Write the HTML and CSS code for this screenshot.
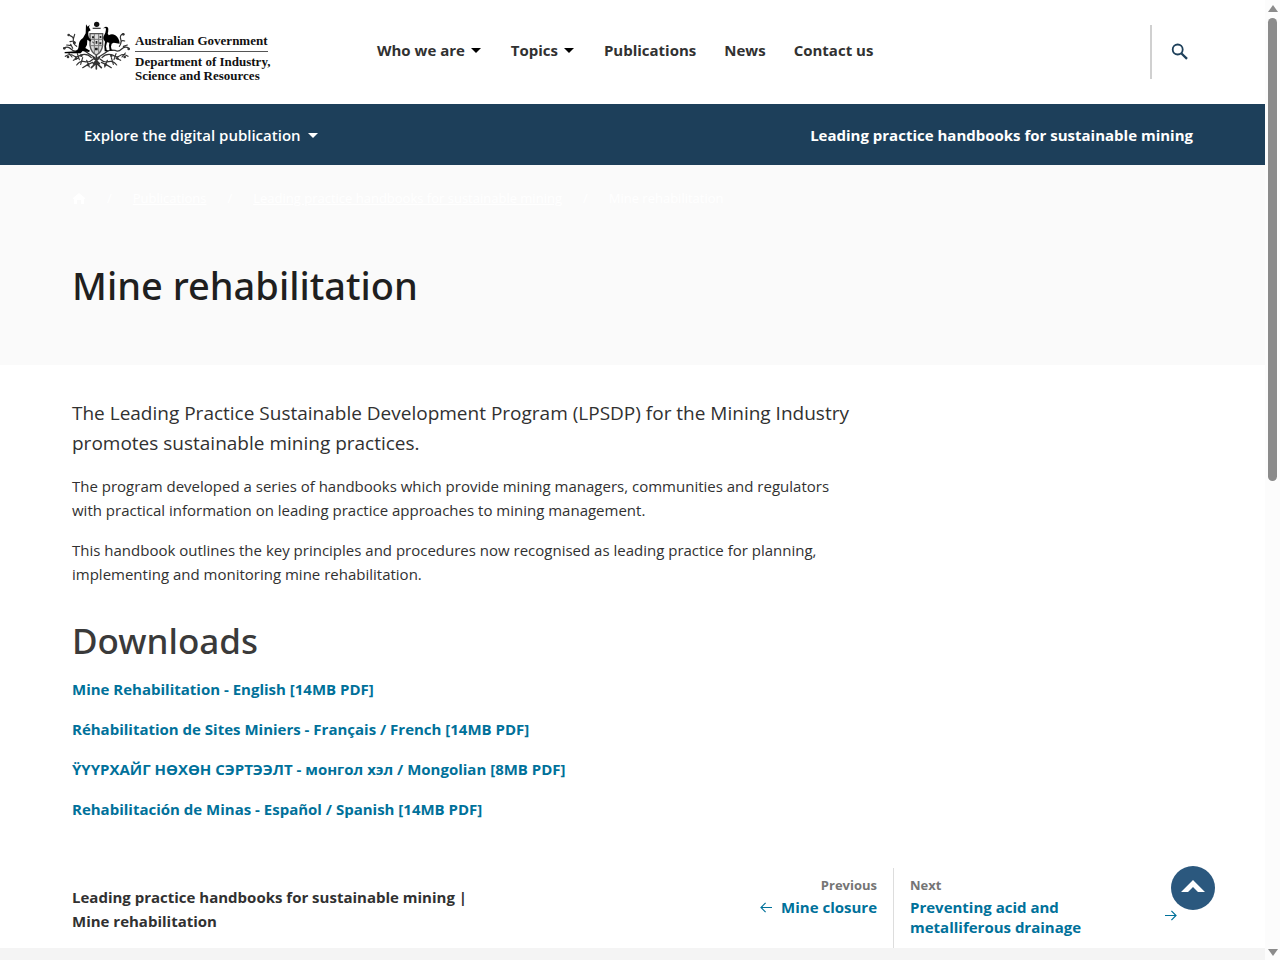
FILE: index.html
```html
<!DOCTYPE html>
<html lang="en">
<head>
<meta charset="utf-8">
<meta name="viewport" content="width=device-width, initial-scale=1">
<title>Mine rehabilitation | Department of Industry, Science and Resources</title>
<link rel="stylesheet" href="styles.css">
</head>
<body>
<header class="site-header">
  <a class="logo" href="#" aria-label="Department of Industry, Science and Resources home">
    <svg class="crest" viewBox="0 0 210 150" aria-hidden="true">
      <g fill="none" stroke="#333" stroke-width="3.5" stroke-linecap="round">
        <path d="M5 82q12-8 22 2t20 4q18-4 30 8l22 14M10 106q14-10 24-2t22-2q20-6 32 8M44 132q10-14 24-10t26-8M62 140q14-10 30-16M24 44q12 4 10 14t10 18M24 62q12-4 16 4M38 40l-4 14M14 72l14 2M20 96l10 12M32 82l-6-12M46 98l6 18M34 118l14-6M62 110l-6 20M74 118l8 20"/>
        <path d="M201 82q-12-8-22 2t-20 4q-18-4-30 8l-22 14M198 106q-14-10-24-2t-22-2q-20-6-32 8M164 132q-10-14-24-10t-26-8M148 140q-14-10-30-16M184 38q-12 4-8 16t-4 22M188 60q-10-4-12 6M196 72l-12 4M190 96l-10 12M162 98l-6 18M176 118l-14-6M148 110l6 20M136 118l-8 20"/>
        <path d="M103 103v41M103 126l-15 14M103 126l15 14M94 110l18 18M112 110l-18 18" stroke-width="5"/>
      </g>
      <g fill="#333">
        <circle cx="7" cy="82" r="4"/><circle cx="20" cy="42" r="4"/><circle cx="37" cy="65" r="4"/><circle cx="18" cy="108" r="4"/><circle cx="42" cy="112" r="4"/><circle cx="58" cy="104" r="4"/><circle cx="78" cy="132" r="4"/>
        <circle cx="200" cy="84" r="4"/><circle cx="184" cy="40" r="4"/><circle cx="188" cy="108" r="4"/><circle cx="166" cy="112" r="4"/><circle cx="148" cy="104" r="4"/><circle cx="130" cy="132" r="4"/>
      </g>
      <path d="M84 38h38v35q-3 21-19 29-16-8-19-29z" fill="#ddd" stroke="#555" stroke-width="4"/>
      <path d="M84 55h38M84 74h38M97 39v57M110 39v57" stroke="#777" stroke-width="3"/>
      <path d="M90 46h6v6h-6zM101 60h5v8h-5zM113 45h5v6h-5zM90 63q4-5 6 5zM112 64h6v6h-6zM99 80h8v8h-8z" fill="#222"/>
      <circle cx="104" cy="10" r="8" fill="#111"/>
      <path d="M92 22h24" stroke="#444" stroke-width="4"/>
      <path d="M72 10l5 7 6-6-2 8 5 9-7 4q-1 10 2 18l7 8-3 4-9-6-1 15-5 10 14 8-3 4-19-3-6 7H8v-4l33-2q8-3 9-16 0-16 13-24l8-14z" fill="#000"/>
      <path d="M123 22l8-5q7-1 8 6 0 10-2 14l3 6q10-7 20 0 12 8 13 25l-18-3-6 3-2 9 2 9 8 3h-14l-2-15 1-9-7-1-3 12 2 11 8 4h-14l-1-15 2-14q-7-7-5-14 3-7 6-13 3-10 1-14z" fill="#000"/>
    </svg>
    <span class="logo-text"><span class="logo-gov">Australian Government</span><span>Department of Industry,<br>Science and Resources</span></span>
  </a>
  <nav class="main-nav" aria-label="Main">
    <button type="button">Who we are <i class="caret"></i></button>
    <button type="button">Topics <i class="caret"></i></button>
    <a href="#">Publications</a>
    <a href="#">News</a>
    <a href="#">Contact us</a>
  </nav>
  <div class="search">
    <button type="button" aria-label="Search"><svg viewBox="0 0 18 18" width="18" height="18" fill="none" stroke="#1d3f5a"><circle cx="6.7" cy="6.5" r="5" stroke-width="1.8"/><path d="M10.5 10.5l5.5 5.3" stroke-width="2.3"/></svg></button>
  </div>
</header>
<div class="publication-bar">
  <button type="button">Explore the digital publication <i class="caret"></i></button>
  <a href="#">Leading practice handbooks for sustainable mining</a>
</div>
<section class="hero">
  <nav aria-label="Breadcrumb">
    <ol class="breadcrumb">
      <li><a href="#" aria-label="Home"><svg viewBox="0 0 14 14" width="14" height="14" fill="#fff"><path d="M7 1L1 6v1h1v5h3V8h4v4h3V7h1V6z"/></svg></a></li>
      <li><a href="#">Publications</a></li>
      <li><a href="#">Leading practice handbooks for sustainable mining</a></li>
      <li>Mine rehabilitation</li>
    </ol>
  </nav>
  <h1>Mine rehabilitation</h1>
</section>
<main class="content">
  <article>
    <p class="lead">The Leading Practice Sustainable Development Program (LPSDP) for the Mining Industry promotes sustainable mining practices.</p>
    <p>The program developed a series of handbooks which provide mining managers, communities and regulators with practical information on leading practice approaches to mining management.</p>
    <p>This handbook outlines the key principles and procedures now recognised as leading practice for planning, implementing and monitoring mine rehabilitation.</p>
    <h2>Downloads</h2>
    <p><a href="#">Mine Rehabilitation - English [14MB PDF]</a></p>
    <p><a href="#">Réhabilitation de Sites Miniers - Français / French [14MB PDF]</a></p>
    <p><a href="#">ŸҮҮРХАЙГ НӨХӨН СЭРТЭЭЛТ - монгол хэл / Mongolian [8MB PDF]</a></p>
    <p><a href="#">Rehabilitación de Minas - Español / Spanish [14MB PDF]</a></p>
  </article>
  <nav class="pager" aria-label="Publication pages">
    <p class="pager-title">Leading practice handbooks for sustainable mining |<br>Mine rehabilitation</p>
    <div class="previous">
      <span class="label">Previous</span>
      <a href="#"><svg class="arrow" viewBox="0 0 14 12"><path d="M13 6H1M6 1L1 6l5 5"/></svg>Mine closure</a>
    </div>
    <div class="next">
      <div><span class="label">Next</span><a href="#">Preventing acid and metalliferous drainage</a></div>
      <svg class="arrow" viewBox="0 0 14 12"><path d="M1 6h12M8 1l5 5-5 5"/></svg>
    </div>
  </nav>
</main>
<footer class="site-footer"></footer>
<button type="button" class="to-top" aria-label="Back to top"><svg viewBox="0 0 24 12" width="24" height="12"><path d="M0 12L12 0l12 12h-7l-5-5-5 5z" fill="#fff"/></svg></button>
<div class="scrollbar" aria-hidden="true"><i class="up"></i><i class="thumb"></i><i class="down"></i></div>
</body>
</html>
```
FILE: styles.css
```css
* { box-sizing: border-box; }
body {
  margin: 0;
  padding-right: 15px;
  min-height: 100vh;
  display: flex;
  flex-direction: column;
  background: #fff;
  color: #313131;
  font: 15px/24px "Open Sans", "Noto Sans", sans-serif;
}
button { font: inherit; color: inherit; background: none; border: 0; padding: 0; cursor: pointer; }
a { color: inherit; text-decoration: none; }
p, h1, h2, ol { margin: 0; }

.site-header { display: flex; height: 104px; padding: 0 72px 0 62px; }
.logo { display: flex; width: 206px; padding-top: 21px; gap: 3px; color: #111; }
.crest { flex: none; width: 70px; height: 50px; }
.logo-text {
  flex: 1;
  min-width: 0;
  display: flex;
  flex-direction: column;
  padding-top: 13px;
  font: bold 13px/14px "Liberation Serif", "Times New Roman", serif;
  white-space: nowrap;
}
.logo-gov { padding-bottom: 3px; margin-bottom: 3px; border-bottom: 1px solid #555; }
.main-nav { display: flex; align-items: flex-start; gap: 28px; margin-left: 109px; padding-top: 38px; font-weight: 700; white-space: nowrap; }
.main-nav button { margin-right: 2px; }
.caret {
  display: inline-block;
  margin-left: 2px;
  border: 5px solid transparent;
  border-top-color: #000;
  border-bottom: 0;
  vertical-align: 3px;
}
.search { margin: 25px 0 auto auto; height: 54px; border-left: 2px solid #d0d0d0; padding: 18px 4px 0 19px; }
.search svg { display: block; }

.publication-bar {
  display: flex;
  justify-content: space-between;
  align-items: center;
  height: 61px;
  padding: 0 72px 0 84px;
  background: #1d3f5a;
  color: #fff;
  font-weight: 600;
}
.publication-bar .caret { border-top-color: #fff; margin-left: 4px; }
.publication-bar a { font-weight: 700; }

.hero { height: 200px; padding: 21px 72px 0; background: #fafafa; }
.breadcrumb { display: flex; list-style: none; padding: 0; color: #fff; font-size: 13px; }
.breadcrumb li + li::before { content: "/"; margin: 0 21px; }
.breadcrumb a { text-decoration: underline; }
.breadcrumb svg { vertical-align: -3px; }
h1, h2 { font-family: "Noto Sans", "Open Sans", sans-serif; font-weight: 500; }
h1 { margin-top: 51px; font-size: 38px; line-height: 48px; color: #1f1f1f; }

.content { padding: 33px 72px 0; }
article { max-width: 790px; }
article p { margin-bottom: 16px; }
article .lead { font-size: 19px; line-height: 30px; }
article a { color: #00719a; font-weight: 700; }
h2 { margin: 33px 0 14px; font-size: 35px; line-height: 44px; color: #3a3a3a; }

.pager { display: flex; margin-top: 47px; min-height: 80px; font-weight: 700; line-height: 20px; }
.pager-title { padding-top: 17px; line-height: 24px; }
.pager a { color: #00719a; }
.label { display: block; font-size: 13px; line-height: 20px; color: #757575; margin-bottom: 2px; }
.arrow { flex: none; width: 13px; height: 11px; fill: none; stroke: #00719a; stroke-width: 1.3; }
.previous { margin-left: auto; padding: 7px 16px 0 0; text-align: right; }
.previous .arrow { margin-right: 8px; }
.next { display: flex; align-items: center; justify-content: space-between; width: 300px; padding: 7px 16px 0; border-left: 1px solid #ddd; }
.next div { width: 190px; align-self: flex-start; }
.next .arrow { margin-top: 8px; }

.site-footer { flex: 1; min-height: 12px; background: #f4f4f4; }

.to-top {
  position: fixed;
  right: 65px;
  bottom: 50px;
  width: 44px;
  height: 44px;
  border-radius: 50%;
  background: #2b587e;
}
.to-top svg { display: block; margin: -4px auto 0; }
.scrollbar {
  position: fixed;
  inset: 0 0 0 auto;
  width: 15px;
  display: flex;
  flex-direction: column;
  align-items: center;
  padding: 5px 0 4px;
  background: #fcfcfc;
}
.thumb { width: 9px; height: 463px; margin: 6px 0 auto; border-radius: 5px; background: #8b8b8b; }
.up, .down { border: 5px solid transparent; }
.up { border-top: 0; border-bottom: 7px solid #8b8b8b; }
.down { border-bottom: 0; border-top: 7px solid #8b8b8b; }
```
